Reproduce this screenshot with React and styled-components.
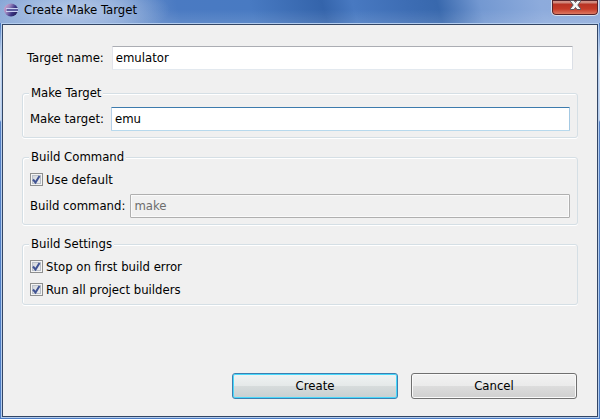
import React from "react";
import styled, { createGlobalStyle } from "styled-components";

const GlobalStyle = createGlobalStyle`
  * { box-sizing: border-box; }
  body { margin: 0; }
  body, button, input {
    font-family: "DejaVu Sans Condensed", "DejaVu Sans", sans-serif;
    font-size: 13px;
    line-height: 16px;
    color: #000;
  }
`;

const Window = styled.form`
  display: flex;
  flex-direction: column;
  min-height: 100vh;
  padding: 0 1px 1px;
  background:
    linear-gradient(180deg, #fff0 24px, #dde6f3 60px, #c8d6eb 120px, #5580c4 122px, #4c7cc4 100%) 0 0 / 100% 100% no-repeat,
    #4c7cc4;
`;

const TitleBar = styled.header`
  display: flex;
  align-items: flex-start;
  justify-content: space-between;
  height: 23px;
  margin: 0 -1px;
  background:
    radial-gradient(ellipse 100px 30px at 70px 10px, #b9cbe8 0%, #b0c5e6a0 50%, #b0c5e600 100%),
    linear-gradient(180deg, #ffffff00 40%, #ffffff1c 100%),
    linear-gradient(75deg, #789bd0 0%, #6f94cd 20%, #4a7ac2 30%, #487ac2 42%, #3464ab 54%, #4879c1 59%, #3d6db4 68%, #3868ad 73%, #7398d1 80%, #8dabdc 90%, #8facdb 100%);
`;

const Title = styled.h1`
  display: flex;
  align-items: center;
  gap: 5px;
  margin: 0;
  padding: 2px 0 0 4px;
  font-size: 13px;
  font-weight: 400;
`;

const CloseButton = styled.button`
  display: flex;
  justify-content: center;
  width: 48px;
  height: 16px;
  margin-right: 1px;
  padding: 0;
  border: 1px solid #d8dfeb;
  border-top: 0;
  border-radius: 0 0 5px 5px;
  background: linear-gradient(180deg, #d79b91 0, #cf8276 3px, #b83324 4px, #c63b28 9px, #e0846e 100%);
  box-shadow: inset 0 0 0 1px #56242b;
`;

const Client = styled.main`
  display: flex;
  flex: 1;
  flex-direction: column;
  padding: 21px 19px 17px;
  border: 1px solid #334665;
  outline: 1px solid #b4cdee;
  margin: 1px;
  background: #f0f0f0;
`;

const Field = styled.div`
  display: flex;
  align-items: center;
  gap: ${(p) => p.$gap || 5}px;
  padding: 0 ${(p) => (p.$inset ? 5 : 0)}px;
`;

const tones = {
  plain: "#abadb3 #dbdfe6 #e3e9ef #e2e3ea",
  active: "#3d7bad #a4c9e3 #b7d9ed #b5cfe7",
  disabled: "#afafaf",
};

const TextInput = styled.input`
  flex: 1;
  min-width: 0;
  height: 24px;
  padding: 0 3px 2px;
  border: 1px solid;
  border-color: ${(p) => tones[p.$tone]};
  border-radius: 1px;
  outline: 0;
  background: #fff;

  &:disabled {
    color: #6d6d6d;
    background: #f0f0f0;
    box-shadow: inset 0 0 0 1px #fafafa;
  }
`;

const Group = styled.fieldset`
  display: grid;
  gap: 6px;
  min-width: 0;
  margin: ${(p) => (p.$first ? 15 : 11)}px 0 0;
  padding: 6px 7px;
  border: 1px solid #d5dfe5;
  border-radius: 3px;
  box-shadow: 0 1px 0 #fff, inset 1px 1px 0 #fff;
`;

const Legend = styled.legend`
  height: 16px;
  margin-left: -1px;
  padding: 0 2px;
  background: #f0f0f0;
`;

const CheckLabel = styled.label`
  display: flex;
  align-items: center;
  gap: 3px;
  height: 17px;
`;

const CheckFrame = styled.span`
  display: grid;
  width: 13px;
  height: 13px;

  & > * { grid-area: 1 / 1; }
  & > svg { pointer-events: none; }
  & > input:not(:checked) + svg { visibility: hidden; }
`;

const CheckInput = styled.input`
  appearance: none;
  width: 13px;
  height: 13px;
  margin: 0;
  border: 1px solid #8e8f8f;
  background: linear-gradient(135deg, #cbcfd5, #f6f6f6);
  box-shadow: inset 0 0 0 1px #f4f4f4, inset 0 0 0 2px #b9bfc8;
`;

const Footer = styled.footer`
  display: flex;
  justify-content: flex-end;
  gap: 13px;
  margin-top: auto;
  padding-right: 1px;
`;

const PushButton = styled.button`
  width: 166px;
  height: 26px;
  padding: 0;
  border: 1px solid ${(p) => (p.$primary ? "#3c7fb1" : "#707070")};
  border-radius: 3px;
  background: ${(p) =>
    p.$primary
      ? "linear-gradient(180deg, #f0f3f3 0%, #e5e9e9 48%, #d7dcdc 49%, #c8cfd1 100%)"
      : "linear-gradient(180deg, #f2f2f2 0%, #ebebeb 48%, #dddddd 49%, #cfcfcf 100%)"};
  box-shadow: inset 0 0 0 1px ${(p) => (p.$primary ? "#48d8fb" : "#fafafa")};
`;

function EclipseIcon() {
  return (
    <svg width="15" height="16" viewBox="0 0 15 16" aria-hidden="true">
      <defs>
        <linearGradient id="orb" x1="0" y1="0" x2="1" y2="0.5">
          <stop offset="0" stopColor="#e6a9cc" />
          <stop offset="0.4" stopColor="#9b87c0" />
          <stop offset="0.75" stopColor="#3b3484" />
          <stop offset="1" stopColor="#29235f" />
        </linearGradient>
      </defs>
      <ellipse cx="7" cy="8" rx="7" ry="6.5" fill="url(#orb)" />
      <path d="M2 6.5h12M2 9.5h12" stroke="#c9d0f1" />
      <path d="M3 8h11" stroke="#5a5c9f" strokeWidth="2" />
    </svg>
  );
}

function CloseIcon() {
  return (
    <svg width="13" height="11" viewBox="0 0 13 11" aria-hidden="true">
      <path
        d="M1.5.5h3.5l1.5 2 1.5-2h3.5v1L8.8 5l2.7 3.5v1H8l-1.5-2-1.5 2H1.5v-1L4.2 5 1.5 1.5z"
        fill="#f5f5f5"
        stroke="#54545f"
      />
    </svg>
  );
}

function Check({ id, label }) {
  return (
    <CheckLabel htmlFor={id}>
      <CheckFrame>
        <CheckInput type="checkbox" id={id} defaultChecked />
        <svg width="13" height="13" viewBox="0 0 13 13" aria-hidden="true">
          <path d="M3 6.5 5.5 9.5 9.5 3" fill="none" stroke="#405393" strokeWidth="2" />
        </svg>
      </CheckFrame>
      {label}
    </CheckLabel>
  );
}

export default function App() {
  return (
    <>
      <GlobalStyle />
      <Window onSubmit={(e) => e.preventDefault()}>
        <TitleBar>
          <Title>
            <EclipseIcon />
            Create Make Target
          </Title>
          <CloseButton type="button" aria-label="Close">
            <CloseIcon />
          </CloseButton>
        </TitleBar>
        <Client>
          <Field $inset $gap={8}>
            <label htmlFor="name">Target name:</label>
            <TextInput id="name" $tone="plain" defaultValue="emulator" />
          </Field>
          <Group $first>
            <Legend>Make Target</Legend>
            <Field $gap={7}>
              <label htmlFor="target">Make target:</label>
              <TextInput id="target" $tone="active" defaultValue="emu" />
            </Field>
          </Group>
          <Group>
            <Legend>Build Command</Legend>
            <Check id="use-default" label="Use default" />
            <Field>
              <label htmlFor="command">Build command:</label>
              <TextInput id="command" $tone="disabled" defaultValue="make" disabled />
            </Field>
          </Group>
          <Group>
            <Legend>Build Settings</Legend>
            <Check id="stop" label="Stop on first build error" />
            <Check id="run-all" label="Run all project builders" />
          </Group>
          <Footer>
            <PushButton type="submit" $primary>Create</PushButton>
            <PushButton type="button">Cancel</PushButton>
          </Footer>
        </Client>
      </Window>
    </>
  );
}
